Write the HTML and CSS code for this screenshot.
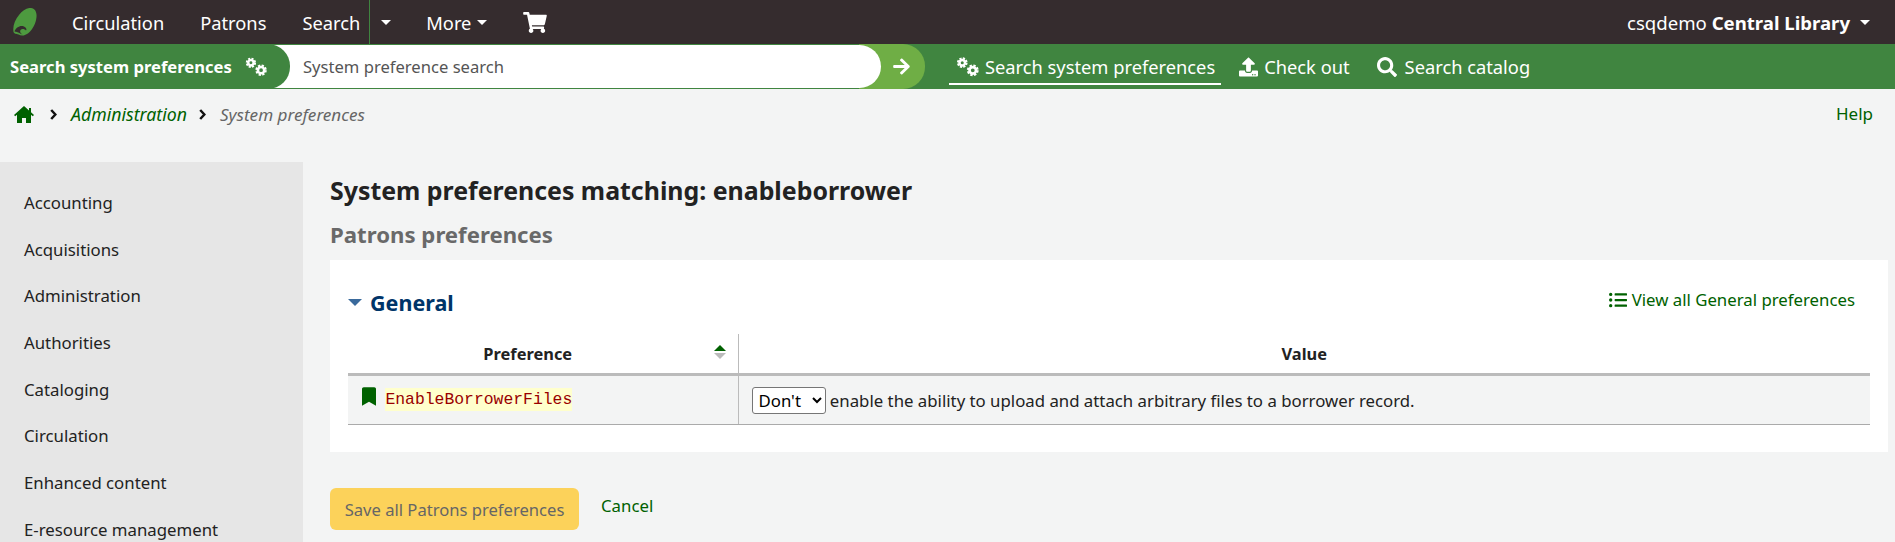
FILE: index.html
```html
<!DOCTYPE html>
<html lang="en">
<head>
<meta charset="utf-8">
<title>System preferences</title>
<link rel="stylesheet" href="styles.css">
</head>
<body>
<svg class="defs" aria-hidden="true">
  <symbol id="cogs" viewBox="0 0 26 22">
    <g fill="none" stroke="currentColor">
      <circle cx="7.500" cy="7" r="4.400" stroke-width="2.400" stroke-dasharray="2.200 1.260"/>
      <circle cx="7.500" cy="7" r="2.900" stroke-width="2.600"/>
      <circle cx="18.500" cy="15" r="5" stroke-width="2.400" stroke-dasharray="2.400 1.530"/>
      <circle cx="18.500" cy="15" r="3.400" stroke-width="2.800"/>
    </g>
  </symbol>
  <symbol id="search" viewBox="0 0 512 512">
    <path fill="currentColor" d="M505 442.7L405.3 343c-4.5-4.5-10.6-7-17-7H372c27.6-35.3 44-79.7 44-128C416 93.1 322.9 0 208 0S0 93.1 0 208s93.1 208 208 208c48.3 0 92.7-16.4 128-44v16.3c0 6.4 2.5 12.5 7 17l99.7 99.7c9.4 9.4 24.6 9.4 33.9 0l28.3-28.3c9.4-9.4 9.4-24.6.1-34zM208 336c-70.7 0-128-57.2-128-128 0-70.7 57.2-128 128-128 70.7 0 128 57.2 128 128 0 70.7-57.2 128-128 128z"/>
  </symbol>
  <symbol id="chev" viewBox="0 0 7 11">
    <path fill="none" stroke="currentColor" stroke-width="2.500" d="M1.200 1L5.400 5.500 1.200 10"/>
  </symbol>
</svg>

<header class="topbar">
  <nav class="mainnav">
    <a class="logo" href="#">
      <svg viewBox="0 0 24 28" width="24" height="28"><path fill="#4d9a3f" d="M18 0c4 .5 6 4 5.500 9-.5 6-3.500 12-8 16-3 2.500-7 3.500-10 1.500C3 25.500 1 26 .5 24 -.5 18 2 12 6 7c3.500-4.500 8-7.500 12-7z"/><path fill="#352c2e" d="M1.500 23.500C3 19.500 7 17 11 18.500c2.500 1 3 3.500 2 4-1.500-1.500-4-2-5.500-.5-1 1.500 0 3.500 2 4.500C7 26 5 23.500 1.500 23.500z"/></svg>
    </a>
    <a class="navitem nav-circ" href="#">Circulation</a>
    <a class="navitem nav-pat" href="#">Patrons</a>
    <a class="navitem nav-search" href="#">Search</a>
    <span class="splitcaret"><i class="caret"></i></span>
    <a class="navitem nav-more" href="#">More<i class="caret"></i></a>
    <a class="cart" href="#">
      <svg viewBox="0 0 576 512" width="24" height="21"><path fill="#fff" d="M528.12 301.319l47.273-208C578.806 78.301 567.391 67 551.99 67H159.208l-9.166-44.81C147.758 10.021 137.93 0 125.937 0H24C10.745 0 0 10.745 0 24v16c0 13.255 10.745 24 24 24h69.883l70.248 343.435C147.325 417.1 136 435.222 136 456c0 30.928 25.072 56 56 56s56-25.072 56-56c0-15.674-6.447-29.835-16.824-40h209.647C430.447 426.165 424 440.326 424 456c0 30.928 25.072 56 56 56s56-25.072 56-56c0-22.172-12.888-41.332-31.579-50.405l5.517-24.276c3.413-15.018-8.002-29.319-23.403-29.319H218.117l-6.545-32h293.145c11.206 0 20.92-7.754 23.403-18.681z"/></svg>
    </a>
  </nav>
  <a class="user" href="#">csqdemo <strong>Central Library</strong><i class="caret usercaret"></i></a>
</header>

<div class="searchbar">
  <div class="searchlabel">
    <span>Search system preferences</span>
    <svg class="ico-cogs-small"><use href="#cogs"/></svg>
  </div>
  <div class="searchfield">System preference search</div>
  <div class="searchgo">
    <svg viewBox="0 0 448 512" width="17" height="19"><path fill="#fff" d="M190.5 66.900l22.200-22.200c9.400-9.400 24.600-9.400 33.900 0L441 239c9.400 9.400 9.400 24.600 0 33.900L246.600 467.300c-9.400 9.400-24.600 9.400-33.900 0l-22.200-22.200c-9.500-9.500-9.300-25 .4-34.300L311.400 296H24c-13.300 0-24-10.700-24-24v-32c0-13.300 10.700-24 24-24h287.400L190.900 101.200c-9.800-9.300-10-24.800-.4-34.300z"/></svg>
  </div>
  <div class="tabs">
    <a class="tab tab-active" href="#"><svg class="ico-cogs"><use href="#cogs"/></svg>Search system preferences</a>
    <a class="tab" href="#"><svg viewBox="0 0 512 512" width="19" height="20"><path fill="#fff" d="M296 384h-80c-13.300 0-24-10.700-24-24V192h-87.700c-17.800 0-26.700-21.500-14.100-34.100L242.300 5.700c7.500-7.500 19.800-7.500 27.300 0l152.200 152.200c12.600 12.600 3.700 34.100-14.100 34.100H320v168c0 13.300-10.700 24-24 24zm216-8v112c0 13.300-10.700 24-24 24H24c-13.300 0-24-10.700-24-24V376c0-13.300 10.700-24 24-24h136v8c0 30.900 25.100 56 56 56h80c30.900 0 56-25.100 56-56v-8h136c13.300 0 24 10.700 24 24zm-124 88c0-11-9-20-20-20s-20 9-20 20 9 20 20 20 20-9 20-20zm64 0c0-11-9-20-20-20s-20 9-20 20 9 20 20 20 20-9 20-20z"/></svg>Check out</a>
    <a class="tab tab-cat" href="#"><svg class="ico-search"><use href="#search"/></svg>Search catalog</a>
  </div>
</div>

<div class="crumbs">
  <div class="crumblist">
    <a class="home" href="#"><svg viewBox="0 0 20 17" width="20" height="17"><path fill="#006100" d="M10 0l5 4.500V2h2v4.300l3 2.700-1.200 1.200L17 8.800V17h-5v-5H8v5H3V8.800l-1.800 1.400L0 9z"/></svg></a>
    <svg class="chev"><use href="#chev"/></svg>
    <a class="crumb" href="#">Administration</a>
    <svg class="chev"><use href="#chev"/></svg>
    <span class="crumb-current">System preferences</span>
  </div>
  <a class="help" href="#">Help</a>
</div>

<div class="layout">
  <aside class="sidebar">
    <ul class="sidelist">
      <li>Accounting</li>
      <li>Acquisitions</li>
      <li>Administration</li>
      <li>Authorities</li>
      <li>Cataloging</li>
      <li>Circulation</li>
      <li>Enhanced content</li>
      <li>E-resource management</li>
    </ul>
  </aside>
  <main class="content">
    <h1 class="title">System preferences matching: enableborrower</h1>
    <h2 class="subtitle">Patrons preferences</h2>
    <section class="panel">
      <div class="panelhead">
        <h3 class="general"><i class="gencaret"></i>General</h3>
        <a class="viewall" href="#"><svg viewBox="0 0 512 512" width="18" height="18"><path fill="#006100" d="M48 48a48 48 0 1 0 48 48 48 48 0 0 0-48-48zm0 160a48 48 0 1 0 48 48 48 48 0 0 0-48-48zm0 160a48 48 0 1 0 48 48 48 48 0 0 0-48-48zm448 16H176a16 16 0 0 0-16 16v32a16 16 0 0 0 16 16h320a16 16 0 0 0 16-16v-32a16 16 0 0 0-16-16zm0-320H176a16 16 0 0 0-16 16v32a16 16 0 0 0 16 16h320a16 16 0 0 0 16-16V80a16 16 0 0 0-16-16zm0 160H176a16 16 0 0 0-16 16v32a16 16 0 0 0 16 16h320a16 16 0 0 0 16-16v-32a16 16 0 0 0-16-16z"/></svg>View all General preferences</a>
      </div>
      <table class="prefs">
        <thead>
          <tr>
            <th class="col-pref">Preference<span class="sort"><i class="sort-up"></i><i class="sort-down"></i></span></th>
            <th>Value</th>
          </tr>
        </thead>
        <tbody>
          <tr>
            <td class="col-pref cell-name">
              <svg viewBox="0 0 384 512" width="14" height="19"><path fill="#006100" d="M0 512V48C0 21.490 21.490 0 48 0h288c26.510 0 48 21.490 48 48v464L192 400 0 512z"/></svg>
              <code class="prefname">EnableBorrowerFiles</code>
            </td>
            <td class="cell-value">
              <select class="sel"><option>Don't</option></select>
              enable the ability to upload and attach arbitrary files to a borrower record.
            </td>
          </tr>
        </tbody>
      </table>
    </section>
    <div class="actions">
      <button class="save" type="button">Save all Patrons preferences</button>
      <a class="cancel" href="#">Cancel</a>
    </div>
  </main>
</div>
</body>
</html>
```
FILE: styles.css
```css
html, body {
  margin: 0;
  padding: 0;
  height: 100%;
  overflow: hidden;
}
body {
  background: #f3f4f4;
  color: #000;
  font-family: "Noto Sans", sans-serif;
  font-size: 16.8px;
}
a { text-decoration: none; color: #006100; }
.defs { display: none; }

.topbar {
  height: 44px;
  background: #352c2e;
  display: flex;
  justify-content: space-between;
  align-items: center;
}
.mainnav { display: flex; align-items: center; height: 44px; }
.logo { display: block; width: 24px; height: 28px; margin-left: 13px; }
.navitem { color: #fff; font-size: 18.3px; }
.nav-circ { margin-left: 35px; }
.nav-pat { margin-left: 36px; }
.nav-search { margin-left: 36px; }
.splitcaret {
  margin-left: 9px;
  width: 30px;
  height: 44px;
  border-left: 1px solid #408540;
  display: flex;
  align-items: center;
  padding-left: 11px;
  box-sizing: border-box;
}
.caret {
  display: inline-block;
  width: 0;
  height: 0;
  border-top: 5px solid #fff;
  border-left: 5px solid transparent;
  border-right: 5px solid transparent;
}
.nav-more { margin-left: 27px; display: flex; align-items: center; gap: 6px; }
.cart { margin-left: 36px; display: flex; }
.user { color: #fff; font-size: 18.6px; margin-right: 25px; display: flex; align-items: center; white-space: pre; }
.usercaret { margin-left: 10px; }

.searchbar {
  height: 45px;
  background: #408540;
  display: flex;
  align-items: stretch;
}
.searchlabel {
  width: 290px;
  box-sizing: border-box;
  padding-left: 10px;
  display: flex;
  align-items: center;
  gap: 12px;
  color: #fff;
  font-weight: 700;
  font-size: 16.6px;
  white-space: nowrap;
  border-radius: 0 22px 22px 0;
  background: #408540;
  position: relative;
  z-index: 2;
}
.ico-cogs-small { width: 24px; height: 21px; color: #fff; }
.searchfield {
  margin: 1px 0 1px -22px;
  width: 613px;
  box-sizing: border-box;
  padding-left: 35px;
  background: #fff;
  color: #555;
  font-size: 16.6px;
  display: flex;
  align-items: center;
  border-radius: 0 22px 22px 0;
  position: relative;
  z-index: 1;
}
.searchgo {
  margin: 0 0 0 -22px;
  width: 66px;
  box-sizing: border-box;
  padding-left: 34px;
  background: #6fae45;
  border-radius: 0 22px 22px 0;
  display: flex;
  align-items: center;
}
.tabs { display: flex; margin-left: 24px; gap: 12px; align-items: center; }
.tab {
  color: #fff;
  font-size: 18.3px;
  display: flex;
  align-items: center;
  gap: 6px;
  height: 36px;
  padding: 0 6px;
  box-sizing: border-box;
  white-space: nowrap;
}
.tab-active { box-shadow: inset 0 -2px 0 #fff; gap: 5px; }
.tab-cat { margin-left: 2px; }
.ico-cogs { width: 25px; height: 21px; color: #fff; }
.ico-search { width: 20px; height: 20px; color: #fff; margin-left: 1px; margin-right: 2px; }

.crumbs {
  height: 73px;
  box-sizing: border-box;
  padding: 13px 22px 0 14px;
  display: flex;
  justify-content: space-between;
  align-items: flex-start;
}
.crumblist { display: flex; align-items: center; height: 24px; }
.home { display: flex; margin-top: 1px; }
.chev { width: 7px; height: 11px; color: #111; margin: 1px 14px 0 12px; }
.home + .chev { margin: 1px 14px 0 16px; }
.crumb { font-style: italic; font-size: 17.7px; }
.crumb-current { font-style: italic; font-size: 17.1px; color: #666; }
.help { font-size: 17px; }

.layout { display: flex; align-items: stretch; height: 380px; }
.sidebar { width: 303px; background: #e6e6e6; flex: none; overflow: hidden; }
.sidelist { list-style: none; margin: 0; padding: 18px 0 0 24px; }
.sidelist li { height: 46.7px; line-height: 46.7px; color: #222; white-space: nowrap; }
.content { flex: 1; padding: 0 7px 0 27px; min-width: 0; }
.title { margin: 12px 0 0; font-size: 24.9px; line-height: 32px; font-weight: 700; color: #222; }
.subtitle { margin: 15px 0 0; font-size: 22.2px; line-height: 28px; font-weight: 700; color: #696969; }
.panel { margin-top: 11px; background: #fff; height: 192px; padding: 0 18px; box-sizing: border-box; }
.panelhead { display: flex; justify-content: space-between; align-items: center; height: 74px; padding-top: 5px; box-sizing: border-box; }
.general { margin: 5px 0 0; font-size: 21.5px; font-weight: 700; color: #003569; display: flex; align-items: center; gap: 8px; }
.gencaret { width: 0; height: 0; border-top: 7px solid #3a6a9c; border-left: 7px solid transparent; border-right: 7px solid transparent; }
.viewall { display: flex; align-items: center; gap: 5px; margin-right: 15px; }
.prefs { width: 100%; border-collapse: collapse; }
.prefs th { height: 39px; padding: 0; font-size: 16.4px; font-weight: 700; color: #222; border-bottom: 3px solid #bbb; position: relative; text-align: center; }
.prefs th.col-pref { padding-right: 30px; }
.col-pref { width: 390px; border-right: 1px solid #bbb; box-sizing: border-box; }
.sort { position: absolute; right: 12px; top: 11px; display: flex; flex-direction: column; gap: 2px; }
.sort-up { width: 0; height: 0; border-bottom: 6px solid #006100; border-left: 6px solid transparent; border-right: 6px solid transparent; }
.sort-down { width: 0; height: 0; border-top: 6px solid #bbb; border-left: 6px solid transparent; border-right: 6px solid transparent; }
.prefs td { background: #f3f4f4; height: 48px; padding: 0; border-bottom: 1px solid #aaa; }
.prefs td.cell-name { padding: 0 0 5px 14px; box-sizing: border-box; }
.cell-name svg { vertical-align: -2px; margin-right: 5px; }
.prefname { font-family: "Liberation Mono", monospace; font-size: 16.4px; color: #900; background: #ffc; padding: 2px 0; }
.prefs td.cell-value { padding-left: 13px; color: #222; }
.sel { font-family: "Noto Sans", sans-serif; font-size: 16.8px; height: 27px; width: 74px; background: #fff; color: #000; border: 1px solid #767676; border-radius: 3px; padding: 0 0 0 2px; margin-right: 0; }
.actions { display: flex; align-items: flex-start; margin-top: 36px; }
.save { width: 249px; height: 42px; background: #fcd25a; color: #666; border: 0; border-radius: 6px; font-family: "Noto Sans", sans-serif; font-size: 16.6px; padding: 0; }
.cancel { margin-left: 22px; margin-top: 6px; }
```
